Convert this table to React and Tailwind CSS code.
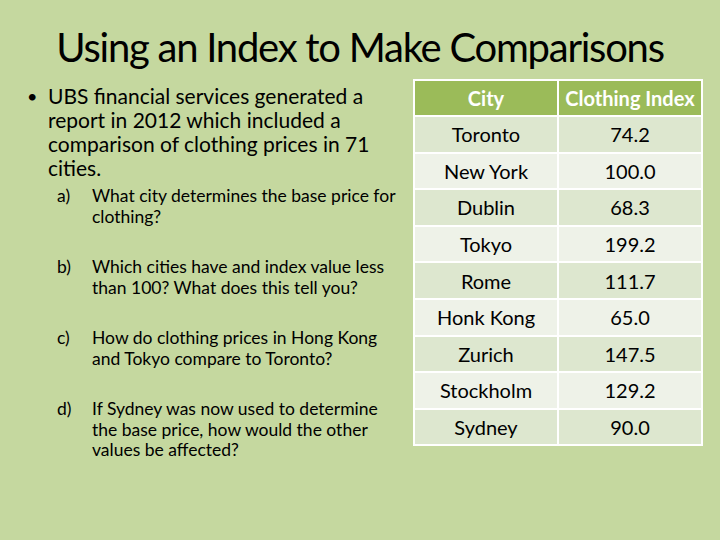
import React from "react";

const rows = [
  ["Toronto", "74.2"],
  ["New York", "100.0"],
  ["Dublin", "68.3"],
  ["Tokyo", "199.2"],
  ["Rome", "111.7"],
  ["Honk Kong", "65.0"],
  ["Zurich", "147.5"],
  ["Stockholm", "129.2"],
  ["Sydney", "90.0"],
];

const questions = [
  ["a)", ["What city determines the base price for", "clothing?"]],
  ["b)", ["Which cities have and index value less", "than 100? What does this tell you?"]],
  ["c)", ["How do clothing prices in Hong Kong", "and Tokyo compare to Toronto?"]],
  ["d)", ["If Sydney was now used to determine", "the base price, how would the other", "values be affected?"]],
];

export default function App() {
  return (
    <div
      className="w-[720px] h-[540px] bg-[#c5d89f] text-black overflow-hidden"
      style={{ fontFamily: "Lato, 'Open Sans', sans-serif" }}
    >
      <div className="h-[79px] pt-[22px] text-center text-[40px] leading-[50px] tracking-[-1.25px]">
        Using an Index to Make Comparisons
      </div>
      <div className="flex items-start">
        <div className="w-[405px] pl-[27px] pt-[5px]">
          <div className="flex text-[21px] leading-[24px]">
            <span className="w-[21px] shrink-0 text-[18px]">•</span>
            <span className="whitespace-nowrap">
              UBS financial services generated a<br />
              report in 2012 which included a<br />
              comparison of clothing prices in 71<br />
              cities.
            </span>
          </div>
          <div className="mt-[6px] ml-[30px] flex flex-col gap-[30px] text-[17.5px] leading-[20.5px]">
            {questions.map(([l, lines]) => (
              <div key={l} className="flex">
                <span className="w-[35px] shrink-0">{l}</span>
                <span className="whitespace-nowrap">
                  {lines.map((ln, i) => (
                    <React.Fragment key={i}>
                      {i > 0 && <br />}
                      {ln}
                    </React.Fragment>
                  ))}
                </span>
              </div>
            ))}
          </div>
        </div>
        <div className="ml-[8px] w-[290px] self-start bg-white p-[2px] grid grid-cols-[142px_142px] content-start gap-[2px] text-[20px]">
          <div className="h-[34px] bg-[#9bbb59] text-white font-bold flex items-center justify-center">City</div>
          <div className="h-[34px] bg-[#9bbb59] text-white font-bold flex items-center justify-center">Clothing Index</div>
          {rows.map(([c, v], i) => (
            <React.Fragment key={c}>
              <div className={`h-[34.6px] flex items-center justify-center ${i % 2 === 0 ? "bg-[#dde7cf]" : "bg-[#eef2e8]"}`}>{c}</div>
              <div className={`h-[34.6px] flex items-center justify-center ${i % 2 === 0 ? "bg-[#dde7cf]" : "bg-[#eef2e8]"}`}>{v}</div>
            </React.Fragment>
          ))}
        </div>
      </div>
    </div>
  );
}
